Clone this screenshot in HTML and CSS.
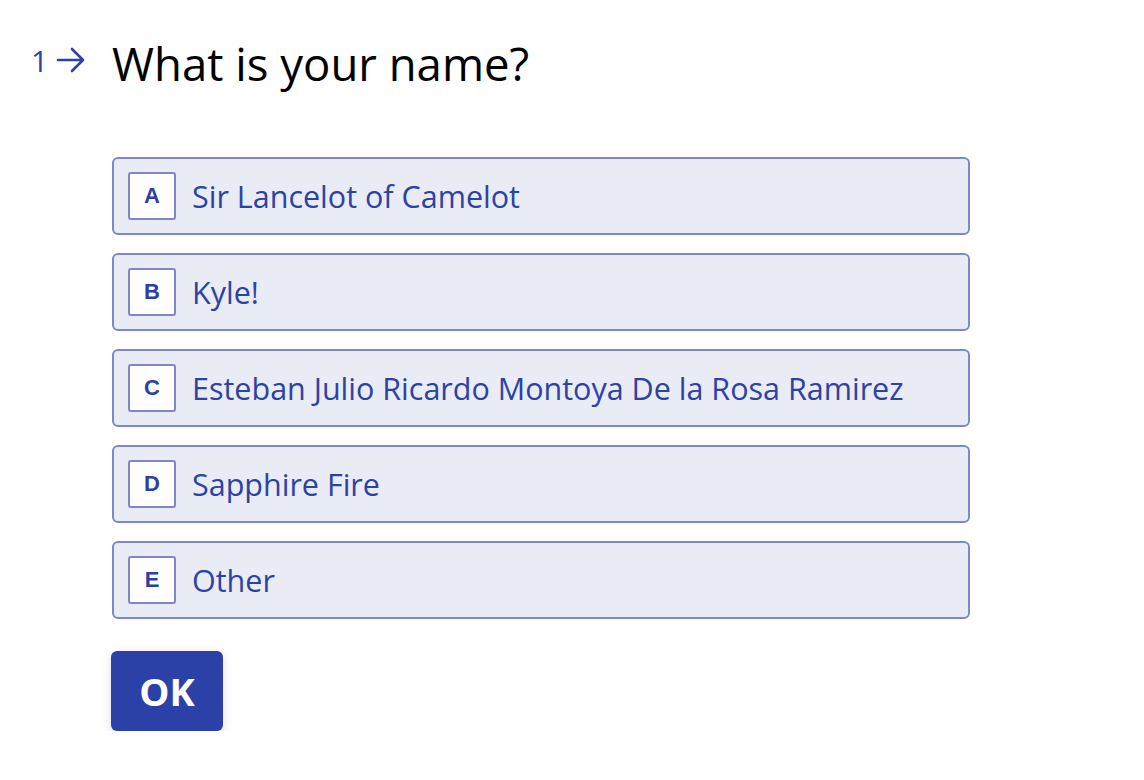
FILE: index.html
```html
<!DOCTYPE html>
<html>
<head>
<meta charset="utf-8">
<link rel="stylesheet" href="styles.css">
</head>
<body>
<div class="page">
  <div class="question">
    <div class="qnum">
      <span class="num">1</span>
      <svg class="arrow" width="30" height="28" viewBox="0 0 30 28"><path d="M2 14 H27 M16 3 L27 14 L16 25" fill="none" stroke="#2d42a6" stroke-width="2.6" stroke-linecap="round" stroke-linejoin="round"/></svg>
    </div>
    <div class="qbody">
      <h1 class="title">What is your name?</h1>
      <div class="options">
        <div class="option"><span class="key">A</span><span class="label">Sir Lancelot of Camelot</span></div>
        <div class="option"><span class="key">B</span><span class="label">Kyle!</span></div>
        <div class="option"><span class="key">C</span><span class="label">Esteban Julio Ricardo Montoya De la Rosa Ramirez</span></div>
        <div class="option"><span class="key">D</span><span class="label">Sapphire Fire</span></div>
        <div class="option"><span class="key">E</span><span class="label">Other</span></div>
      </div>
      <button class="ok">OK</button>
    </div>
  </div>
</div>
</body>
</html>
```
FILE: styles.css
```css
html, body { margin: 0; padding: 0; background: #fff; }
body { font-family: "Open Sans", "Noto Sans", sans-serif; }
.page { padding: 30px 0 0 0; }
.question { display: flex; }
.qnum { width: 112px; display: flex; align-items: center; height: 62px; padding-left: 31px; box-sizing: border-box; gap: 8px; }
.num { color: #2d42a6; font-size: 30px; line-height: 1; font-weight: 400; }
.arrow { display: block; margin-top: -2px; }
.qbody { width: 858px; }
.title { margin: 0; font-weight: 400; font-size: 45.5px; line-height: 66px; color: #000; }
.options { margin-top: 61px; display: flex; flex-direction: column; gap: 18px; }
.option { height: 78px; box-sizing: border-box; border: 2px solid #7b89cc; border-radius: 6px; background: #e9ecf5; display: flex; align-items: center; padding-left: 14px; }
.key { width: 48px; height: 48px; box-sizing: border-box; border: 2px solid #7b89cc; border-radius: 3px; background: #fff; display: flex; align-items: center; justify-content: center; font-family: "Liberation Sans", Arial, sans-serif; font-weight: 700; font-size: 22px; color: #2d3fa0; }
.label { margin-left: 16px; font-size: 30.5px; color: #2d42a6; }
.ok { margin-top: 32px; margin-left: -1px; width: 112px; height: 80px; border: 0; border-radius: 6px; background: #2c41a8; color: #fff; font-family: "Open Sans", sans-serif; font-weight: 700; font-size: 38px; box-shadow: 0 3px 12px rgba(0,0,0,0.12); padding: 0; }
```
